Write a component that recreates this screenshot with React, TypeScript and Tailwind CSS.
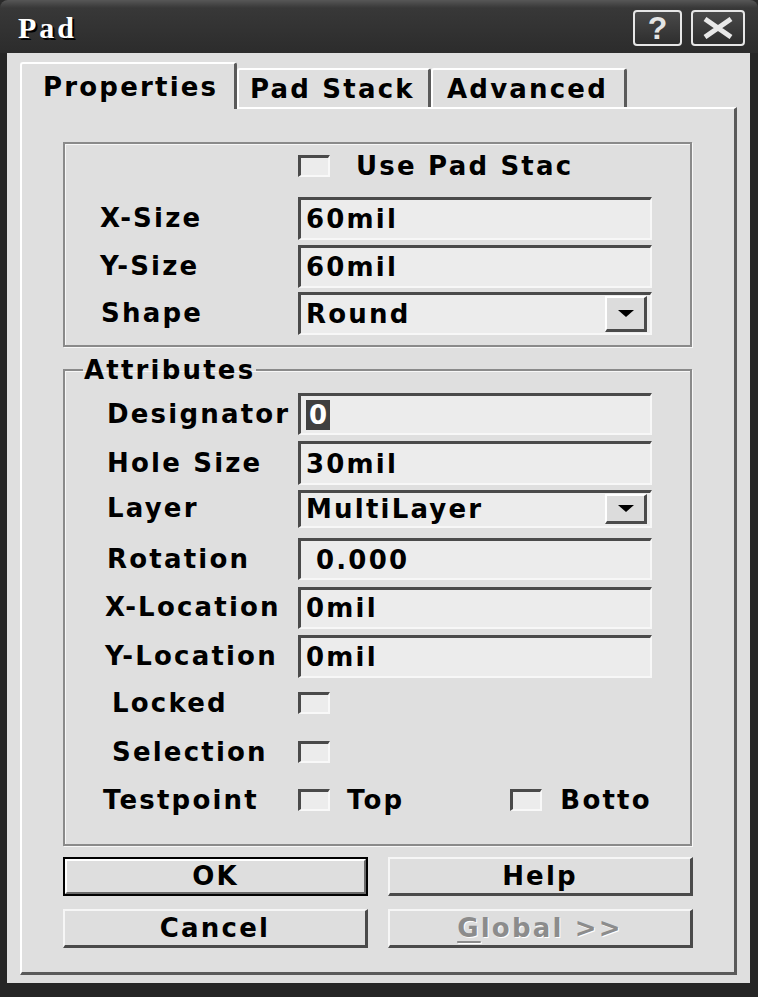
import type { ReactNode } from "react";

const label = "text-[26px] font-bold leading-[30px] tracking-[2.2px] whitespace-nowrap";

function Field({ h, children }: { h: string; children: ReactNode }) {
  return (
    <div
      className={`flex ${h} w-[354px] items-center border-t-[3px] border-l-[3px] border-b-2 border-r-2 border-t-[#4a4a4a] border-l-[#4a4a4a] border-b-[#f7f7f7] border-r-[#f7f7f7] bg-[#ececec] pl-[5px]`}
    >
      {children}
    </div>
  );
}

function DropButton({ h }: { h: string }) {
  return (
    <div
      className={`ml-auto mr-[3px] flex ${h} w-[42px] items-center justify-center border-t-2 border-l-2 border-b-[3px] border-r-[3px] border-t-white border-l-white border-b-[#4a4a4a] border-r-[#4a4a4a] bg-[#dcdcdc]`}
    >
      <svg width="18" height="9" viewBox="0 0 18 9">
        <path d="M1 1h16L9 8z" fill="#000" />
      </svg>
    </div>
  );
}

function Check() {
  return (
    <div className="h-[22px] w-[32px] shrink-0 border-t-[3px] border-l-[3px] border-b-2 border-r-2 border-t-[#4a4a4a] border-l-[#4a4a4a] border-b-[#f8f8f8] border-r-[#f8f8f8] bg-[#ececec]" />
  );
}

function Row({ indent, name, children }: { indent: string; name: string; children: ReactNode }) {
  return (
    <div className="h-[48.4px]">
      <div className="flex items-center">
        <div className={`w-[235px] shrink-0 ${indent}`}>
          <span className={label}>{name}</span>
        </div>
        {children}
      </div>
    </div>
  );
}

function CheckRow({ indent, name, children }: { indent: string; name: string; children?: ReactNode }) {
  return (
    <div className="flex h-[48.4px] items-start pt-[9px]">
      <div className={`flex h-[22px] w-[235px] shrink-0 items-center ${indent}`}>
        <span className={label}>{name}</span>
      </div>
      <div className="flex h-[22px] items-center">
        <Check />
        {children}
      </div>
    </div>
  );
}

function Btn({ children, isDefault }: { children: ReactNode; isDefault?: boolean }) {
  if (isDefault) {
    return (
      <div className="h-[39px] border-2 border-black">
        <div className="flex h-full items-center justify-center border-t-2 border-l-2 border-b-2 border-r-2 border-t-white border-l-white border-b-[#6a6a6a] border-r-[#6a6a6a] bg-[#dedede]">
          {children}
        </div>
      </div>
    );
  }
  return (
    <div className="flex h-[39px] items-center justify-center border-t-2 border-l-2 border-b-[3px] border-r-[3px] border-t-[#f6f6f6] border-l-[#f6f6f6] border-b-[#4a4a4a] border-r-[#4a4a4a] bg-[#dedede]">
      {children}
    </div>
  );
}

export default function App() {
  return (
    <div className="h-[997px] w-[758px] bg-[#2a2a2a] font-['DejaVu_Sans','Liberation_Sans',sans-serif] text-black">
      <div className="flex h-full w-full flex-col rounded-t-[8px] bg-[#262626]">
        {/* title bar */}
        <div className="flex h-[53px] shrink-0 items-start rounded-t-[8px] bg-linear-to-b from-[#575757] via-[#383838] via-15% to-[#2c2c2c] pl-[18px] pr-[13px] pt-[10px]">
          <span className="mt-[3px] font-['Liberation_Serif',serif] text-[30px] font-bold leading-[30px] tracking-[3px] text-white [text-shadow:2px_2px_0_#000]">
            Pad
          </span>
          <div className="ml-auto flex gap-[9px]">
            <div className="flex h-[36px] w-[49px] items-center justify-center rounded-[4px] border-2 border-[#e6e6e6] bg-linear-to-b from-[#4a4a4a] to-[#2e2e2e]">
              <span className="font-['Liberation_Sans',sans-serif] text-[32px] font-bold leading-none text-[#e4e4e4]">?</span>
            </div>
            <div className="flex h-[36px] w-[54px] items-center justify-center rounded-[4px] border-2 border-[#e6e6e6] bg-linear-to-b from-[#4a4a4a] to-[#2e2e2e]">
              <svg width="32" height="22" viewBox="0 0 32 22">
                <path d="M3 2L29 20M29 2L3 20" stroke="#e8e8e8" strokeWidth="5" />
              </svg>
            </div>
          </div>
        </div>

        {/* body */}
        <div className="ml-[7px] mr-[8px] mb-[14px] flex flex-1 flex-col bg-[#dfdfdf] pl-[13px] pt-[9px]">
          {/* tabs */}
          <div className="flex h-[45px] items-end">
            <div className="relative z-10 -mb-[2px] flex h-[47px] w-[217px] items-center rounded-t-[3px] border-t-2 border-l-2 border-r-[3px] border-t-white border-l-white border-r-[#5a5a5a] bg-[#dfdfdf] pl-[21px]">
              <span className={label}>Properties</span>
            </div>
            <div className="flex h-[39px] w-[194px] items-center rounded-t-[3px] border-t-2 border-l-2 border-r-[3px] border-t-white border-l-white border-r-[#5a5a5a] pl-[11px]">
              <span className={label}>Pad Stack</span>
            </div>
            <div className="flex h-[39px] w-[196px] items-center rounded-t-[3px] border-t-2 border-l-2 border-r-[3px] border-t-white border-l-white border-r-[#5a5a5a] pl-[14px]">
              <span className={label}>Advanced</span>
            </div>
          </div>

          {/* tab page */}
          <div className="flex h-[868px] w-[717px] flex-col border-t-2 border-l-2 border-b-[3px] border-r-[3px] border-t-white border-l-white border-b-[#5a5a5a] border-r-[#5a5a5a] pl-[41px] pt-[33px]">
            {/* size group */}
            <div className="flex w-[629px] flex-col border-2 border-[#8a8a8a] pb-[10px] pt-[11px] shadow-[inset_1px_1px_0_#f7f7f7,1px_1px_0_#f7f7f7]">
              <div className="flex h-[22px] items-center pl-[233px]">
                <Check />
                <span className={`${label} ml-[26px]`}>Use Pad Stac</span>
              </div>
              <div className="mt-[20px] flex flex-col gap-[4.5px]">
                <div className="flex items-center">
                  <div className="w-[233px] pl-[35px]">
                    <span className={label}>X-Size</span>
                  </div>
                  <Field h="h-[43px]">
                    <span className={label}>60mil</span>
                  </Field>
                </div>
                <div className="flex items-center">
                  <div className="w-[233px] pl-[35px]">
                    <span className={label}>Y-Size</span>
                  </div>
                  <Field h="h-[43px]">
                    <span className={label}>60mil</span>
                  </Field>
                </div>
                <div className="flex items-center">
                  <div className="w-[233px] pl-[36px]">
                    <span className={label}>Shape</span>
                  </div>
                  <Field h="h-[43px]">
                    <span className={label}>Round</span>
                    <DropButton h="h-[36px]" />
                  </Field>
                </div>
              </div>
            </div>

            {/* attributes group */}
            <fieldset className="mt-[8px] w-[629px] border-2 border-[#8a8a8a] pb-[15px] pt-[8px] shadow-[inset_1px_1px_0_#f7f7f7,1px_1px_0_#f7f7f7]">
              <legend className={`${label} ml-[18px] px-[1px]`}>Attributes</legend>
              <div className="-ml-[2px] flex flex-col">
                <Row indent="pl-[44px]" name="Designator">
                  <Field h="h-[42px]">
                    <span className={`${label} bg-[#404040] px-[3px] tracking-normal text-white`}>0</span>
                  </Field>
                </Row>
                <Row indent="pl-[44px]" name="Hole Size">
                  <Field h="h-[44px]">
                    <span className={label}>30mil</span>
                  </Field>
                </Row>
                <Row indent="pl-[44px]" name="Layer">
                  <Field h="h-[38px]">
                    <span className={label}>MultiLayer</span>
                    <DropButton h="h-[30px]" />
                  </Field>
                </Row>
                <Row indent="pl-[44px]" name="Rotation">
                  <Field h="h-[42px]">
                    <span className={`${label} pl-[10px]`}>0.000</span>
                  </Field>
                </Row>
                <Row indent="pl-[42px]" name="X-Location">
                  <Field h="h-[42px]">
                    <span className={label}>0mil</span>
                  </Field>
                </Row>
                <Row indent="pl-[42px]" name="Y-Location">
                  <Field h="h-[43px]">
                    <span className={label}>0mil</span>
                  </Field>
                </Row>
                <CheckRow indent="pl-[49px]" name="Locked" />
                <CheckRow indent="pl-[49px]" name="Selection" />
                <CheckRow indent="pl-[40px]" name="Testpoint">
                  <span className={`${label} ml-[17px]`}>Top</span>
                  <div className="ml-[106px]">
                    <Check />
                  </div>
                  <span className={`${label} ml-[18px]`}>Botto</span>
                </CheckRow>
              </div>
            </fieldset>

            {/* buttons */}
            <div className="mt-[11px] grid w-[630px] grid-cols-2 gap-x-[20px] gap-y-[13px]">
              <Btn isDefault>
                <span className={label}>OK</span>
              </Btn>
              <Btn>
                <span className={label}>Help</span>
              </Btn>
              <Btn>
                <span className={label}>Cancel</span>
              </Btn>
              <Btn>
                <span className={`${label} text-[#8c8c8c] [text-shadow:1px_1px_0_#fff]`}>
                  <span className="underline decoration-2 underline-offset-4">G</span>lobal &gt;&gt;
                </span>
              </Btn>
            </div>
          </div>
        </div>
      </div>
    </div>
  );
}
